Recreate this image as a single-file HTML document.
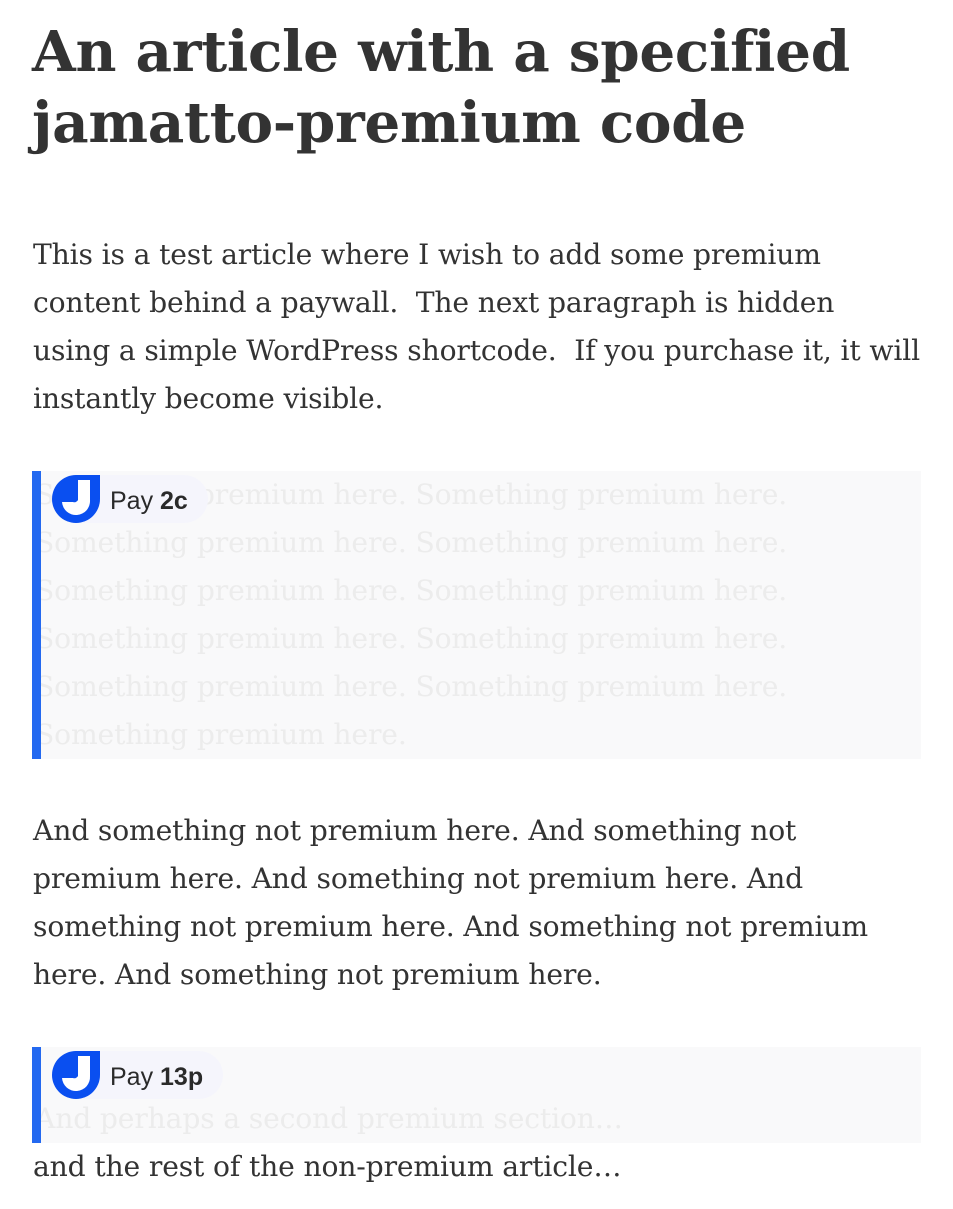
<!DOCTYPE html>
<html><head><meta charset="utf-8"><style>
html,body{margin:0;padding:0;background:#fff;}
body{width:953px;height:1209px;overflow:hidden;position:relative;font-family:"DejaVu Serif","Liberation Serif",serif;color:#333;}
h1{position:absolute;left:32px;top:17px;margin:0;font-size:56.4px;line-height:71px;font-weight:bold;white-space:nowrap;letter-spacing:-0.3px;}
.p{position:absolute;left:33px;font-size:28.2px;line-height:48px;white-space:nowrap;letter-spacing:-0.15px;}
.prem{position:absolute;left:32px;width:889px;background:#f9f9fa;border-left:9px solid #2369f0;box-sizing:border-box;overflow:hidden;}
.prem .t{color:#ececec;font-size:28.2px;line-height:48px;white-space:nowrap;margin-left:-6px;letter-spacing:-0.15px;}
.btn{position:absolute;left:11px;top:4px;height:48px;display:flex;align-items:center;background:#f5f5fc;border-radius:24px;padding-right:20px;font-family:"Liberation Sans","DejaVu Sans",sans-serif;font-size:25px;color:#2a2a2a;}
.btn span{position:relative;top:2px;}
.btn svg{margin-right:10px;}
</style></head><body>
<h1>An article with a specified<br>jamatto-premium code</h1>
<div class="p" style="top:231px">This is a test article where I wish to add some premium<br>content behind a paywall.&nbsp; The next paragraph is hidden<br>using a simple WordPress shortcode.&nbsp; If you purchase it, it will<br>instantly become visible.</div>
<div class="prem" style="top:471px;height:288px">
<div class="t">Something premium here. Something premium here.<br>Something premium here. Something premium here.<br>Something premium here. Something premium here.<br>Something premium here. Something premium here.<br>Something premium here. Something premium here.<br>Something premium here.</div>
<div class="btn"><svg width="48" height="48" viewBox="0 0 48 48"><path d="M24 0H48V24A24 24 0 1 1 24 0Z" fill="#0a4ff0"/><path d="M26 5H38V25A14 14 0 0 1 10 27H21A4 4 0 0 0 26 25Z" fill="#fff"/></svg><span>Pay&nbsp;<b>2c</b></span></div>
</div>
<div class="p" style="top:807px">And something not premium here. And something not<br>premium here. And something not premium here. And<br>something not premium here. And something not premium<br>here. And something not premium here.</div>
<div class="prem" style="top:1047px;height:96px">
<div class="t" style="padding-top:48px">And perhaps a second premium section…</div>
<div class="btn"><svg width="48" height="48" viewBox="0 0 48 48"><path d="M24 0H48V24A24 24 0 1 1 24 0Z" fill="#0a4ff0"/><path d="M26 5H38V25A14 14 0 0 1 10 27H21A4 4 0 0 0 26 25Z" fill="#fff"/></svg><span>Pay&nbsp;<b>13p</b></span></div>
</div>
<div class="p" style="top:1143px">and the rest of the non-premium article…</div>
</body></html>
